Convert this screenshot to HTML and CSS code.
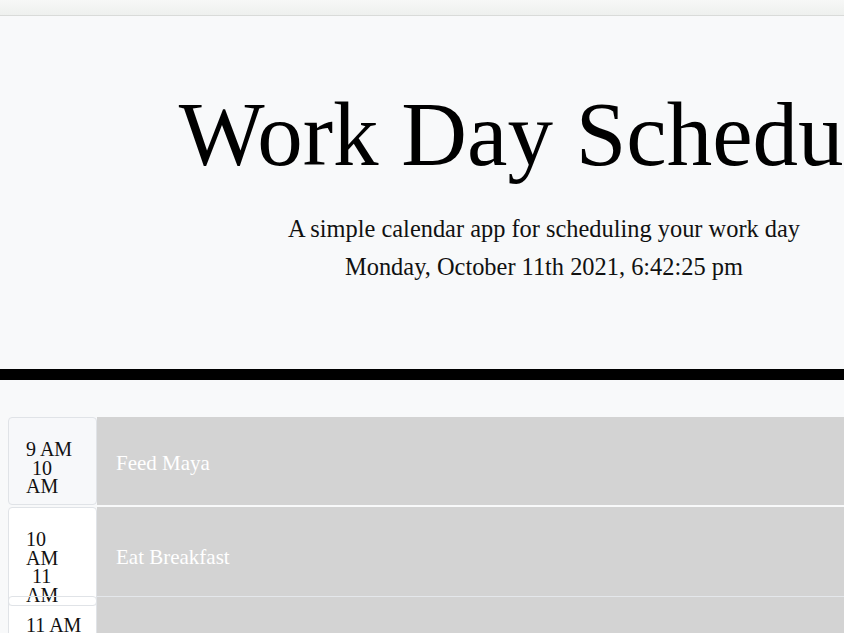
FILE: index.html
```html
<!DOCTYPE html>
<html lang="en">
<head>
<meta charset="utf-8">
<title>Work Day Scheduler</title>
<link rel="stylesheet" href="styles.css">
</head>
<body>
<header class="topbar"></header>
<main class="page">
  <section class="jumbotron">
    <h1 class="title">Work Day Schedule</h1>
    <p class="lead">A simple calendar app for scheduling your work day</p>
    <p class="lead">Monday, October 11th 2021, 6:42:25 pm</p>
  </section>
  <div class="schedule">
    <div class="row row-first">
      <div class="hour hour-muted">
        <span class="line">9 AM</span>
        <span class="line indent">10</span>
        <span class="line">AM</span>
      </div>
      <textarea class="description past">Feed Maya</textarea>
    </div>
    <div class="row row-second">
      <div class="hour hour-tall">
        <span class="line">10</span>
        <span class="line">AM</span>
        <span class="line indent">11</span>
        <span class="line">AM</span>
      </div>
      <textarea class="description past desc-low">Eat Breakfast</textarea>
    </div>
    <div class="row row-third">
      <div class="hour hour-under">
        <span class="line">11 AM</span>
      </div>
      <textarea class="description past"></textarea>
    </div>
  </div>
</main>
</body>
</html>
```
FILE: styles.css
```css
html {
  overflow: hidden;
}

body {
  margin: 0;
  background: #f8f9fa;
  color: #111;
  font-family: "Liberation Serif", "Times New Roman", serif;
}

.topbar {
  height: 15px;
  background: linear-gradient(#f7f8f7, #eef0ee);
  border-bottom: 1px solid #d9dbd9;
}

.page {
  width: 1088px;
}

.jumbotron {
  text-align: center;
  padding: 64px 0 83px;
  border-bottom: 11px solid #000;
}

.title {
  margin: 0 0 20px;
  font-size: 91px;
  line-height: 110px;
  font-weight: 400;
  color: #000;
}

.lead {
  margin: 0;
  font-size: 24.4px;
  line-height: 38px;
  color: #111;
}

.schedule {
  padding: 37px 0 0 8px;
}

.row {
  display: flex;
  align-items: flex-start;
}

.row-first {
  height: 88px;
}

.row-second {
  height: 89px;
  margin-top: 2px;
}

.hour {
  flex: none;
  box-sizing: border-box;
  width: 89px;
  height: 88px;
  padding: 22px 0 0 17px;
  background: #fff;
  border: 1px solid #e0e3e7;
  border-radius: 4px;
  font-size: 20px;
  line-height: 18.5px;
  position: relative;
  z-index: 1;
}

.hour-muted {
  background: #f7f8fa;
}

.hour-tall {
  height: 99px;
}

.hour-under {
  z-index: 2;
  padding-top: 19px;
  background: linear-gradient(transparent 9px, #fff 9px);
}

.line {
  display: block;
}

.indent {
  padding-left: 6px;
}

.description {
  flex: 1;
  box-sizing: border-box;
  height: 100%;
  margin: 0;
  padding: 33px 19px 0;
  border: none;
  border-top: 1px solid #d3d3d3;
  resize: none;
  font-family: "Liberation Serif", "Times New Roman", serif;
  font-size: 21px;
  line-height: 24px;
  outline: none;
}

.row-third .description {
  height: 60px;
  border-top-color: #e4e7eb;
}

.desc-low {
  padding-top: 37px;
}

.past {
  background: #d3d3d3;
  color: #fff;
}
```
